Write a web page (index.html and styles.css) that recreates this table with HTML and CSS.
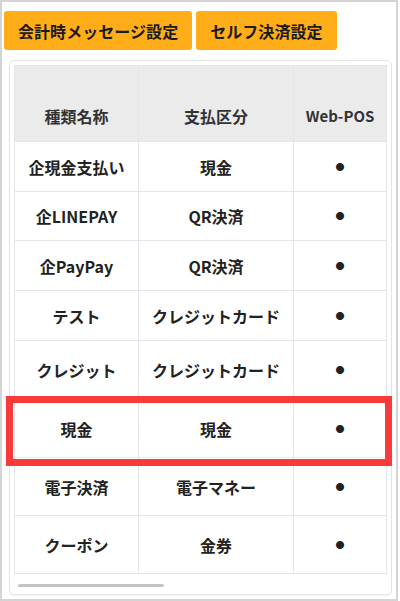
FILE: index.html
```html
<!DOCTYPE html>
<html lang="ja">
<head>
<meta charset="utf-8">
<link rel="stylesheet" href="styles.css">
</head>
<body>
<div class="frame">
  <div class="actions">
    <button class="btn">会計時メッセージ設定</button>
    <button class="btn">セルフ決済設定</button>
  </div>
  <div class="card">
    <div class="scroll">
      <table class="pay-table">
        <colgroup>
          <col class="c1"><col class="c2"><col class="c3">
        </colgroup>
        <thead>
          <tr class="head-row">
            <th>種類名称</th>
            <th>支払区分</th>
            <th class="latin">Web-POS</th>
          </tr>
        </thead>
        <tbody>
          <tr class="r50"><td>企現金支払い</td><td>現金</td><td class="dot">●</td></tr>
          <tr class="r49"><td>企LINEPAY</td><td>QR決済</td><td class="dot">●</td></tr>
          <tr class="r50"><td>企PayPay</td><td>QR決済</td><td class="dot">●</td></tr>
          <tr class="r50"><td>テスト</td><td>クレジットカード</td><td class="dot">●</td></tr>
          <tr class="r59"><td>クレジット</td><td>クレジットカード</td><td class="dot">●</td></tr>
          <tr class="r58"><td>現金</td><td>現金</td><td class="dot">●</td></tr>
          <tr class="r58"><td>電子決済</td><td>電子マネー</td><td class="dot">●</td></tr>
          <tr class="r58"><td>クーポン</td><td>金券</td><td class="dot">●</td></tr>
        </tbody>
      </table>
    </div>
    <div class="scroll-thumb"></div>
  </div>
  <div class="highlight"></div>
</div>
</body>
</html>
```

FILE: styles.css
```css
* { box-sizing: border-box; }
html, body { margin: 0; padding: 0; background: #fff; }
body {
  font-family: "Noto Sans CJK JP", "Noto Sans", sans-serif;
  color: #222;
}
.frame {
  position: relative;
  width: 398px;
  height: 601px;
  border: 2px solid #d4d4d4;
  padding: 9px 2px 0 2px;
}
.actions {
  display: flex;
  gap: 4px;
}
.btn {
  height: 39px;
  padding: 0 14px;
  border: none;
  border-radius: 3px;
  background: #ffae19;
  color: #1b1b1b;
  font-family: inherit;
  font-size: 16px;
  font-weight: 700;
  line-height: 1;
  letter-spacing: 0.05px;
}
.card {
  margin: 10px 0 0 5px;
  width: 383px;
  border: 1px solid #e4e4e4;
  border-radius: 5px;
  padding: 4px 4px 7px 4px;
  box-shadow: 0 1px 2px rgba(0,0,0,0.06);
}
.scroll {
  overflow: hidden;
}
.scroll-thumb {
  margin: 10px 0 0 4px;
  width: 146px;
  height: 3px;
  border-radius: 2px;
  background: #c4c4c4;
}
.pay-table {
  border-collapse: collapse;
  width: 372px;
  table-layout: fixed;
}
.c1 { width: 124px; }
.c2 { width: 155px; }
.c3 { width: 93px; }
.pay-table th,
.pay-table td {
  border: 1px solid #e3e6ea;
  text-align: center;
  font-size: 16px;
  font-weight: 700;
  line-height: 24px;
  padding: 0 4px;
  white-space: nowrap;
}
.pay-table th {
  background: #ebebeb;
  color: #333;
  vertical-align: bottom;
  padding-bottom: 13px;
}
.pay-table th.latin { font-size: 15px; }
.head-row { height: 76px; }
.pay-table td { vertical-align: middle; color: #222; }
.pay-table td.dot { font-size: 9px; color: #222; }
.r49 { height: 49px; }
.r50 { height: 50px; }
.r58 { height: 58px; }
.r59 { height: 59px; }
.highlight {
  position: absolute;
  left: 4px;
  top: 394px;
  width: 386px;
  height: 70px;
  border: 7px solid #f83a3a;
  pointer-events: none;
}
```
